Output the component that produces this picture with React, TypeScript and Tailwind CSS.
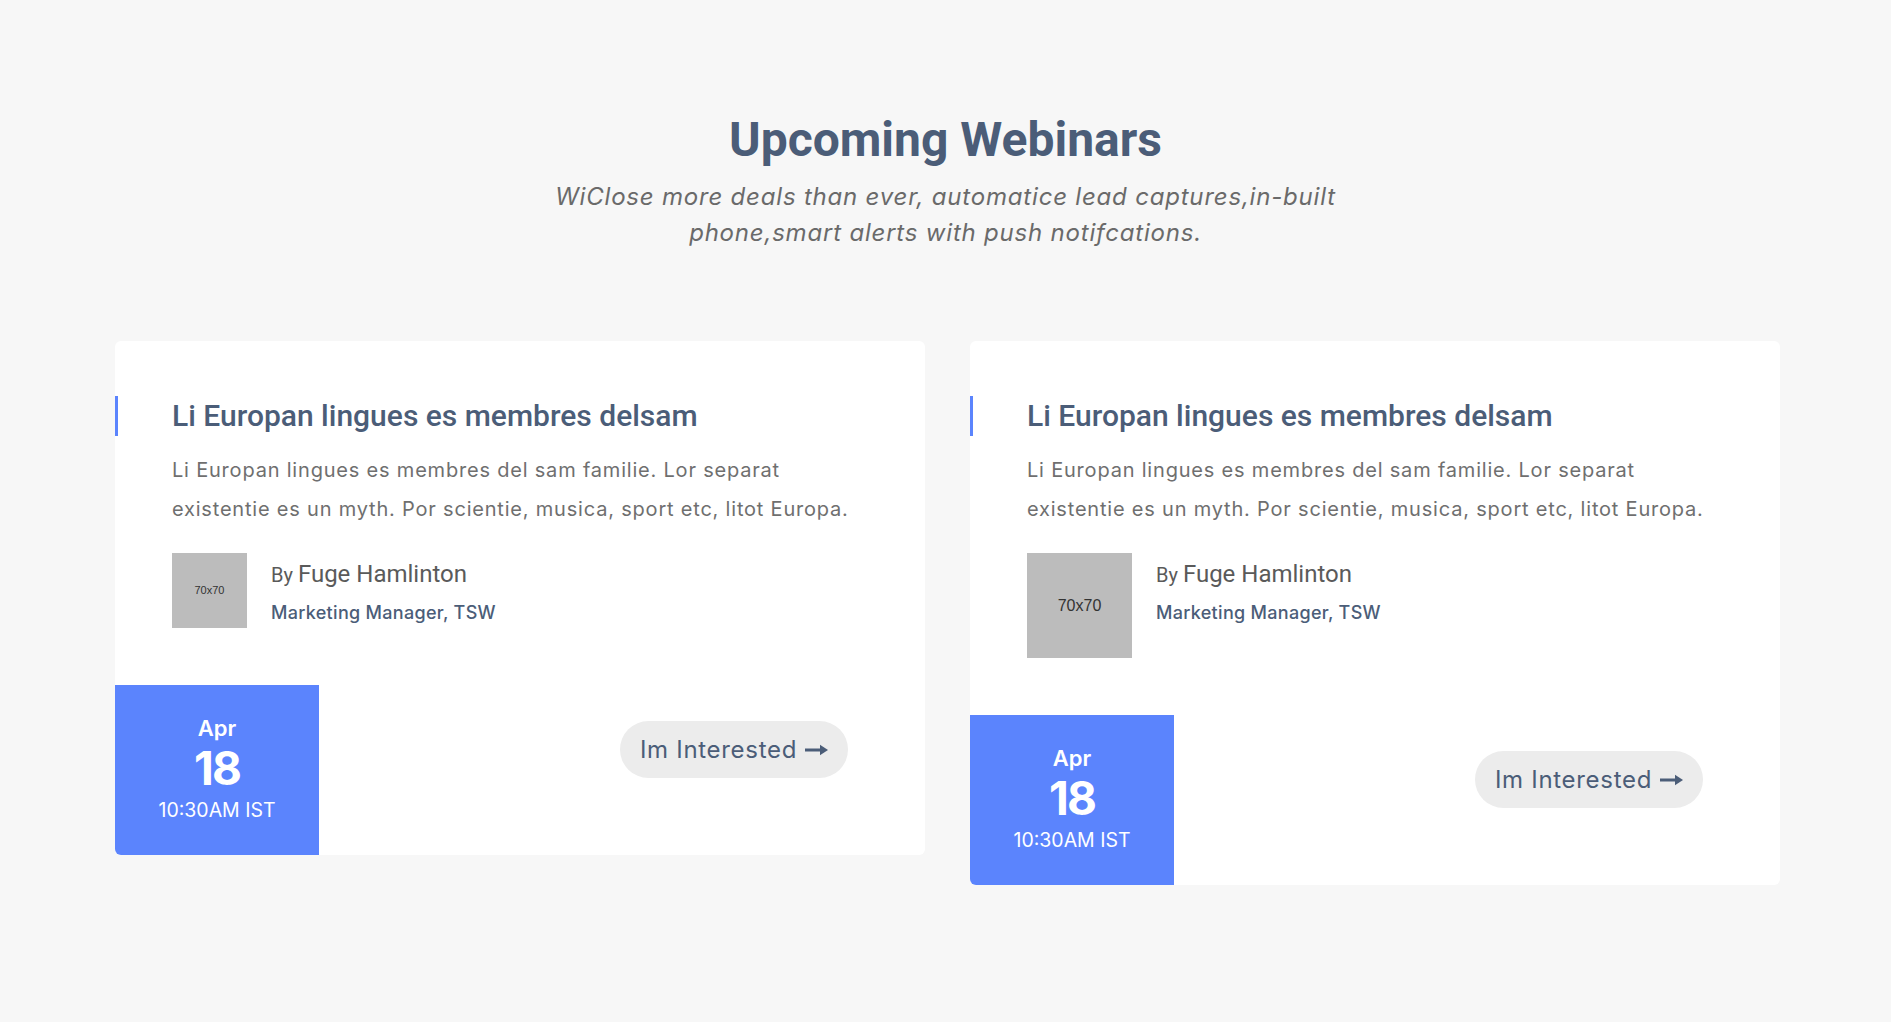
import React from "react";

const body = "font-['Inter','Open_Sans',sans-serif]";
const head = "font-['Roboto','Liberation_Sans',sans-serif]";

type Webinar = {
  title: string;
  text: string;
  author: string;
  role: string;
  imgSize: "sm" | "lg";
};

const webinars: Webinar[] = [
  {
    title: "Li Europan lingues es membres delsam",
    text: "Li Europan lingues es membres del sam familie. Lor separat existentie es un myth. Por scientie, musica, sport etc, litot Europa.",
    author: "Fuge Hamlinton",
    role: "Marketing Manager, TSW",
    imgSize: "sm",
  },
  {
    title: "Li Europan lingues es membres delsam",
    text: "Li Europan lingues es membres del sam familie. Lor separat existentie es un myth. Por scientie, musica, sport etc, litot Europa.",
    author: "Fuge Hamlinton",
    role: "Marketing Manager, TSW",
    imgSize: "lg",
  },
];

function ArrowRight() {
  return (
    <svg width="23" height="12" viewBox="0 0 23 12" fill="none">
      <path d="M0 6h16" stroke="#4b5d78" strokeWidth="3" />
      <path d="M15 0.8L23 6l-8 5.2z" fill="#4b5d78" />
    </svg>
  );
}

function Placeholder({ size }: { size: "sm" | "lg" }) {
  return (
    <div
      className={
        size === "sm"
          ? "w-[75px] h-[75px] shrink-0 bg-[#bcbcbc] flex items-center justify-center font-['Liberation_Sans',sans-serif] text-[11px] text-[#333]"
          : "w-[105px] h-[105px] shrink-0 bg-[#bcbcbc] flex items-center justify-center font-['Liberation_Sans',sans-serif] text-[16px] text-[#333]"
      }
    >
      70x70
    </div>
  );
}

function WebinarCard({ w }: { w: Webinar }) {
  return (
    <div className="bg-white rounded-md overflow-hidden">
      <div className="pt-[55px]">
        <div className="h-[40px] border-l-[3px] border-[#5b84fd] pl-[54px] flex items-center">
          <h3 className={`${head} text-[30px] font-medium text-[#4b5d78] leading-none`}>
            {w.title}
          </h3>
        </div>
        <p className={`${body} mt-[15px] px-[57px] text-[20px] tracking-[0.8px] leading-[39px] text-[#6f6f6f]`}>
          {w.text}
        </p>
        <div className="mt-[24px] px-[57px] flex gap-[24px]">
          <Placeholder size={w.imgSize} />
          <div className="pt-[6px]">
            <div className={`${head} leading-[30px] text-[#5a5a5a]`}>
              <span className="text-[20px]">By </span>
              <span className="text-[24px]">{w.author}</span>
            </div>
            <div className={`${body} mt-[9px] text-[18px] tracking-[0.3px] leading-[24px] font-medium text-[#4b5d78]`}>
              {w.role}
            </div>
          </div>
        </div>
      </div>
      <div className="mt-[57px] flex justify-between items-start">
        <div className={`${body} w-[204px] h-[170px] bg-[#5b84fd] text-white flex flex-col items-center justify-center`}>
          <div className="text-[22px] font-semibold leading-[24px]">Apr</div>
          <div className="text-[46px] font-bold tracking-[-2px] leading-[56px]">18</div>
          <div className="text-[19.5px] leading-[28px]">10:30AM IST</div>
        </div>
        <button
          className={`${body} mt-[36px] mr-[77px] w-[228px] h-[57px] rounded-full bg-[#ececec] flex items-center justify-center gap-[8px] text-[24px] tracking-[0.7px] text-[#4b5d78]`}
        >
          Im Interested
          <ArrowRight />
        </button>
      </div>
    </div>
  );
}

export default function App() {
  return (
    <div className="min-h-[1022px] bg-[#f7f7f7] pt-[112px]">
      <div className="text-center">
        <h2 className={`${head} text-[48px] font-bold leading-[55px] text-[#4b5d78]`}>
          Upcoming Webinars
        </h2>
        <p className={`${body} mt-[12px] text-[24px] tracking-[0.8px] italic leading-[36px] text-[#6a6a6a]`}>
          WiClose more deals than ever, automatice lead captures,in-built
          <br />
          phone,smart alerts with push notifcations.
        </p>
      </div>
      <div className="ml-[115px] mt-[90px] w-[1665px] grid grid-cols-2 gap-[45px] items-start">
        {webinars.map((w, i) => (
          <WebinarCard key={i} w={w} />
        ))}
      </div>
    </div>
  );
}
